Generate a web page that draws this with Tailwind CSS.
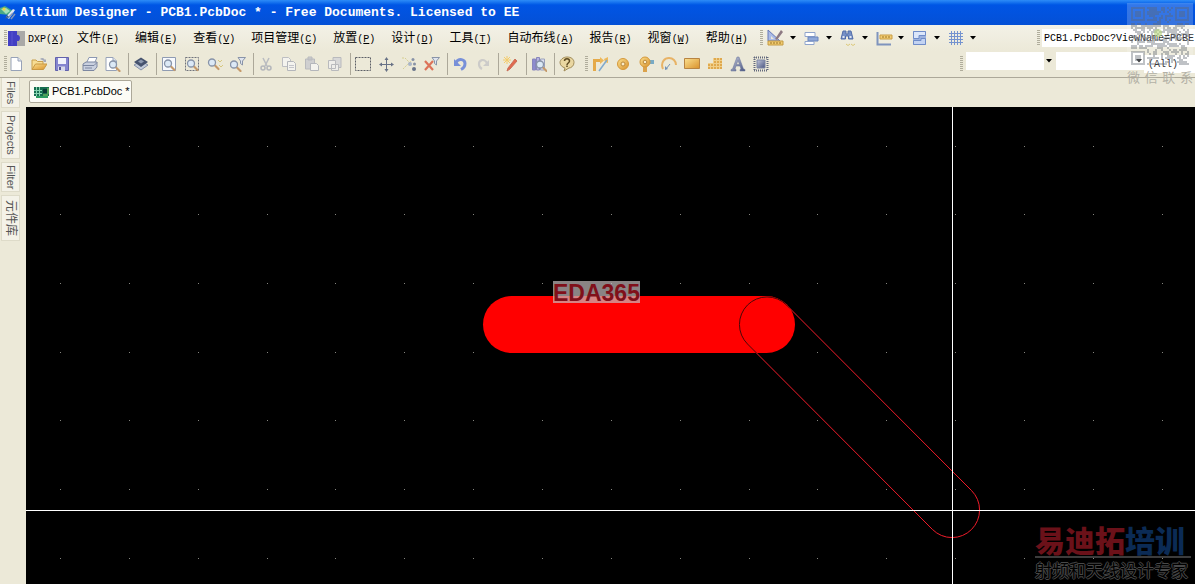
<!DOCTYPE html>
<html lang="zh-CN">
<head>
  <meta charset="UTF-8" />
  <meta name="viewport" content="width=device-width, initial-scale=1.0"/>
  <title>Altium Designer - PCB1.PcbDoc</title>
  <script src="https://cdn.jsdelivr.net/npm/@tailwindcss/browser@4"></script>
</head>
<body class="relative h-screen flex flex-col overflow-hidden bg-[#ece9d8] text-black font-['Liberation_Sans','Noto_Sans_CJK_SC',sans-serif]">

  <!-- Shared icon parts -->
  <svg class="absolute size-0" aria-hidden="true">
    <defs>
      <linearGradient id="gold" x1="0" y1="0" x2="1" y2="1"><stop offset="0" stop-color="#fbe08f"/><stop offset="1" stop-color="#d9912b"/></linearGradient>
      <linearGradient id="steel" x1="0" y1="0" x2="1" y2="1"><stop offset="0" stop-color="#c3c8dc"/><stop offset="1" stop-color="#4a5580"/></linearGradient>
      <symbol id="page" viewBox="0 0 16 16"><path d="M3 1.500h7l3.500 3.500v9.500H3z" fill="#fff" stroke="#97a2b8"/><path d="M10 1.500V5h3.500" fill="#dde3ef" stroke="#97a2b8"/></symbol>
      <symbol id="lens" viewBox="0 0 16 16"><path d="M9.500 10l4 4" stroke="#c59a6b" stroke-width="2.200" stroke-linecap="round"/><circle cx="7" cy="7.500" r="3.500" fill="#dce9f6" stroke="#8793a8" stroke-width="1.300"/></symbol>
      <symbol id="funnel" viewBox="0 0 16 16"><path d="M8 1.500h7.500L12.500 5v4l-2-1.500V5z" fill="#dfe4ee" stroke="#8994a8"/></symbol>
    </defs>
  </svg>

  <!-- Title bar -->
  <header class="h-[25px] shrink-0 flex items-center gap-1 bg-linear-to-b from-[#2d8cf7] via-[#0055e5] via-20% to-[#0450d6]">
    <svg class="size-4" viewBox="0 0 16 16"><path d="M0 3l5-2 8 5-4 4-9-1z" fill="#4aa987"/><path d="M1 4l5-1 4 3-4 3z" fill="#a5e0b8"/><circle cx="4" cy="4" r="1.500" fill="#f2d43c"/><path d="M6 12L13 4l2 1-6 9z" fill="#dfe8f5"/><path d="M8 13l5-5M11 14l4-5" stroke="#8296b8" stroke-width="1.500"/><path d="M5 14l2-4 2 2z" fill="#3e5f92"/></svg>
    <h1 class="text-[13px] leading-5 font-bold text-white whitespace-pre font-['Liberation_Mono',monospace]">Altium Designer - PCB1.PcbDoc * - Free Documents. Licensed to EE</h1>
  </header>

  <!-- Menu bar -->
  <div class="h-[26px] shrink-0 flex items-center pl-1 text-[12px] leading-4 bg-linear-to-b from-[#f3f1e7] to-[#ece9d8] font-['Liberation_Mono','Noto_Sans_CJK_SC',monospace]">
    <span class="h-4 w-[3px] bg-[repeating-linear-gradient(#b0ad9c_0_1px,transparent_1px_2px)]"></span>
    <svg class="size-[17px] ml-px mr-[3px]" viewBox="0 0 17 17"><path d="M0 1h17v15H0z" fill="#aaa9a7"/><path d="M0 1h9v4c4-1 4 7 0 6v5H0z" fill="#433fc4"/><path d="M4 2v13" stroke="#5b57d0"/></svg>
    <nav class="flex gap-4 pt-0.5 whitespace-nowrap">
      <button class="-mr-[3px]"><span class="text-[10px]">DXP(<u>X</u>)</span></button>
      <button>文件<span class="text-[10px]">(<u>F</u>)</span></button>
      <button>编辑<span class="text-[10px]">(<u>E</u>)</span></button>
      <button>查看<span class="text-[10px]">(<u>V</u>)</span></button>
      <button>项目管理<span class="text-[10px]">(<u>C</u>)</span></button>
      <button>放置<span class="text-[10px]">(<u>P</u>)</span></button>
      <button>设计<span class="text-[10px]">(<u>D</u>)</span></button>
      <button>工具<span class="text-[10px]">(<u>T</u>)</span></button>
      <button>自动布线<span class="text-[10px]">(<u>A</u>)</span></button>
      <button>报告<span class="text-[10px]">(<u>R</u>)</span></button>
      <button>视窗<span class="text-[10px]">(<u>W</u>)</span></button>
      <button>帮助<span class="text-[10px]">(<u>H</u>)</span></button>
    </nav>
    <span class="h-4 w-[3px] ml-3 mr-1 bg-[repeating-linear-gradient(#b0ad9c_0_1px,transparent_1px_2px)]"></span>
    <div class="flex gap-[7px]">
      <button aria-label="Utility tools" class="flex items-center gap-[5px]"><svg class="size-[18px]" viewBox="0 0 18 18"><path d="M1 1l12 11H1z" fill="#aabbe6" stroke="#6579b8"/><path d="M4 7l3 3H4z" fill="#ece9d8"/><path d="M8 10l6-9 2 2-6 8z" fill="#8d7a83"/><path d="M1 12h15v4H1z" fill="#f0cb70" stroke="#c49a43"/><path d="M4 13v2M7 13v2M10 13v2M13 13v2" stroke="#9b7427"/></svg><svg class="w-1.5 h-1" viewBox="0 0 6 4"><path d="M0 0h6L3 3.500z"/></svg></button>
      <button aria-label="Align" class="flex items-center gap-[5px]"><svg class="size-[18px]" viewBox="0 0 18 18"><path d="M2 3.500h10v4H2z" fill="#fff" stroke="#8fa4cc"/><path d="M5 8h10v4H5z" fill="#8fa8d8" stroke="#6a85bd"/><path d="M2 12.500h9v3H2z" fill="#fff" stroke="#8fa4cc"/></svg><svg class="w-1.5 h-1" viewBox="0 0 6 4"><path d="M0 0h6L3 3.500z"/></svg></button>
      <button aria-label="Find" class="flex items-center gap-[5px]"><svg class="size-[18px]" viewBox="0 0 18 18"><path d="M4 2h3v3h2V2h3l2 8H9.500V7h-3v3H2z" fill="#7690c6" stroke="#516ca8"/><path d="M3.500 8h2M10.500 8h2" stroke="#fff" stroke-width="1.500"/><path d="M7 15l2 1.500 2-1.500M12 15l2 1.500 2-1.500" fill="none" stroke="#dcc878"/></svg><svg class="w-1.5 h-1" viewBox="0 0 6 4"><path d="M0 0h6L3 3.500z"/></svg></button>
      <button aria-label="Dimension" class="flex items-center gap-[5px]"><svg class="size-[18px]" viewBox="0 0 18 18"><path d="M2.500 3v12.500H16" fill="none" stroke="#7f94bd" stroke-width="2"/><path d="M5 6h12v4H5z" fill="#f3cd74" stroke="#c99d45"/><path d="M8 7v2M11 7v2M14 7v2" stroke="#9b7427"/></svg><svg class="w-1.5 h-1" viewBox="0 0 6 4"><path d="M0 0h6L3 3.500z"/></svg></button>
      <button aria-label="Rooms" class="flex items-center gap-[5px]"><svg class="size-[18px]" viewBox="0 0 18 18"><path d="M2 2h13v14H2z" fill="#9db2de"/><path d="M2.500 2.500h12v4H8v3H2.500z" fill="#dbe6fa" stroke="#6f8cc8"/><path d="M2.500 11.500H10v-2h4.500v6h-12z" fill="#c3d3f2" stroke="#6f8cc8"/></svg><svg class="w-1.5 h-1" viewBox="0 0 6 4"><path d="M0 0h6L3 3.500z"/></svg></button>
      <button aria-label="Grid" class="flex items-center gap-[5px]"><svg class="size-[18px]" viewBox="0 0 18 18"><path d="M4.500 2v14M7.500 2v14M10.500 2v14M13.500 2v14M2 4.500h14M2 7.500h14M2 10.500h14M2 13.500h14" stroke="#7593cf"/></svg><svg class="w-1.5 h-1" viewBox="0 0 6 4"><path d="M0 0h6L3 3.500z"/></svg></button>
    </div>
    <div class="ml-auto w-[158px] flex items-center gap-0.5">
      <span class="h-4 w-[3px] bg-[repeating-linear-gradient(#b0ad9c_0_1px,transparent_1px_2px)]"></span>
      <input aria-label="Document address" value="PCB1.PcbDoc?ViewName=PCBE" class="min-w-0 flex-1 h-[18px] pl-0.5 bg-white text-[10px] outline-none" />
    </div>
  </div>

  <!-- Toolbar -->
  <div class="h-[27px] shrink-0 flex items-center pl-1 border-b border-[#aca899]">
    <span class="h-4 w-[3px] mr-px bg-[repeating-linear-gradient(#b0ad9c_0_1px,transparent_1px_2px)]"></span>
    <div class="h-[22px] flex items-center gap-[7px] pr-[7px] border-r border-[#aca899]">
      <button aria-label="New"><svg class="size-4" viewBox="0 0 16 16"><use href="#page"/></svg></button>
      <button aria-label="Open"><svg class="size-4" viewBox="0 0 16 16"><path d="M1 13.500V4h4l1.500 1.500H12V8" fill="#f7dd94" stroke="#c99f4d"/><path d="M1 13.500L4.500 8H16l-3.500 5.500z" fill="url(#gold)" stroke="#c99843"/><path d="M9 3c2-2 4-1 5 1l1-1v3h-3l1-1" fill="#a4a9b8"/></svg></button>
      <button aria-label="Save"><svg class="size-4" viewBox="0 0 16 16"><path d="M1.500 1.500h13v13h-13z" fill="#8585cf" stroke="#6262ac"/><path d="M4 2h8v6H4z" fill="#f2f3fb"/><path d="M4 10.500h7V15H4z" fill="#d9dae9"/><path d="M5 11h2v3H5z" fill="#54549b"/></svg></button>
    </div>
    <div class="h-[22px] flex items-center gap-[7px] pl-1 pr-[7px] border-r border-[#aca899]">
      <button aria-label="Print"><svg class="size-4" viewBox="0 0 16 16"><path d="M4.500 7L7 1.500h8L12.500 7z" fill="#fff" stroke="#8b97b2"/><path d="M1 8l3-2h11v5l-3 3.500H1z" fill="#c9d0df" stroke="#7c87a1"/><path d="M1 9.500h11l3-3M3 12h7" fill="none" stroke="#7c87a1"/></svg></button>
      <button aria-label="Preview"><svg class="size-4" viewBox="0 0 16 16"><use href="#page" x="-2"/><use href="#lens" x="1" y="1"/></svg></button>
    </div>
    <div class="h-[22px] flex items-center pl-1 pr-[7px] border-r border-[#aca899]">
      <button aria-label="Layers"><svg class="size-4" viewBox="0 0 16 16"><path d="M1 9l7 5 7-5-7-4z" fill="#c3cbd9" stroke="#8591a8"/><path d="M1 6l7-4.500L15 6l-7 5z" fill="#46536e"/><path d="M5 5.500l3-2 3 2-3 2z" fill="#8d99af"/></svg></button>
    </div>
    <div class="h-[22px] flex items-center gap-[7px] pl-1 pr-[7px] border-r border-[#aca899]">
      <button aria-label="Fit document"><svg class="size-4" viewBox="0 0 16 16"><path d="M1.500 1.500h13v13h-13z" fill="#f7f9fd" stroke="#8f9bb2"/><use href="#lens"/></svg></button>
      <button aria-label="Zoom area"><svg class="size-4" viewBox="0 0 16 16"><path d="M1.500 1.500h13v13h-13z" fill="none" stroke="#70737c" stroke-dasharray="2 1"/><use href="#lens"/></svg></button>
      <button aria-label="Zoom selected"><svg class="size-4" viewBox="0 0 16 16"><use href="#lens" x="-2" y="-1"/><path d="M11 4l2 2 2-2M12 9l2 2 2-2" stroke="#d6c77f" fill="none"/></svg></button>
      <button aria-label="Zoom filtered"><svg class="size-4" viewBox="0 0 16 16"><use href="#funnel"/><use href="#lens" x="-3" y="1"/></svg></button>
    </div>
    <div class="h-[22px] flex items-center gap-[7px] pl-1 pr-[7px] border-r border-[#aca899]">
      <button aria-label="Cut"><svg class="size-4" viewBox="0 0 16 16"><path d="M5 2l4 8M11 2l-4 8" stroke="#b9bbc0" stroke-width="1.500"/><circle cx="5" cy="12" r="2" fill="none" stroke="#b4b6bb" stroke-width="1.500"/><circle cx="11" cy="12" r="2" fill="none" stroke="#b4b6bb" stroke-width="1.500"/></svg></button>
      <button aria-label="Copy"><svg class="size-4" viewBox="0 0 16 16"><path d="M1.500 1.500h6l2 2v7h-8z" fill="#f4f3ee" stroke="#bdbec2"/><path d="M6.500 5.500h6l2 2v7h-8z" fill="#f4f3ee" stroke="#b4b6bb"/><path d="M8 9.500h5M8 11.500h5" stroke="#c4c5ca"/></svg></button>
      <button aria-label="Paste"><svg class="size-4" viewBox="0 0 16 16"><path d="M1.500 3h9v10h-9zM4 1h4v3H4z" fill="#cfcfd0" stroke="#b9babd"/><path d="M6.500 7.500h6l2 2v5h-8z" fill="#f4f3ee" stroke="#b4b6bb"/></svg></button>
      <button aria-label="Rubber stamp"><svg class="size-4" viewBox="0 0 16 16"><path d="M6 1.500h8v10H6z" fill="#d8d8d8" stroke="#b9babd"/><path d="M1.500 4.500h7v8h-7zM4.500 8.500h7v6h-7z" fill="#efeeea" stroke="#b9babd"/></svg></button>
    </div>
    <div class="h-[22px] flex items-center gap-[7px] pl-1 pr-[7px] border-r border-[#aca899]">
      <button aria-label="Select area"><svg class="size-4" viewBox="0 0 16 16"><path d="M.5 1.500h15v13H.5z" fill="none" stroke="#5c5f66" stroke-dasharray="2 1"/></svg></button>
      <button aria-label="Move"><svg class="size-4" viewBox="0 0 16 16"><path d="M8.500 3v11M3 8.500h11" stroke="#687286"/><path d="M8.500 1l2 3h-4zM8.500 16l2-3h-4zM1 8.500l3-2v4zM16 8.500l-3-2v4z" fill="#687286"/></svg></button>
      <button aria-label="Deselect"><svg class="size-4" viewBox="0 0 16 16"><path d="M1 2h3l7 7M2 13l8-8" stroke="#d6cf91" fill="none" stroke-dasharray="2 1"/><circle cx="12" cy="3.500" r="1.500" fill="#8792a6"/><circle cx="9" cy="8" r="2" fill="#a9b5c8"/><circle cx="13.500" cy="8" r="1.500" fill="#8792a6"/><circle cx="13" cy="13" r="2" fill="#68738a"/></svg></button>
      <button aria-label="Clear filter"><svg class="size-4" viewBox="0 0 16 16"><use href="#funnel"/><path d="M1 5l8 9M9 5l-8 9" stroke="#dc7359" stroke-width="2.200"/></svg></button>
    </div>
    <div class="h-[22px] flex items-center gap-[7px] pl-1 pr-[7px] border-r border-[#aca899]">
      <button aria-label="Undo"><svg class="size-4" viewBox="0 0 16 16"><path d="M4 6.500c3-5 9-3 9 1 0 3-2 5-4 6" fill="none" stroke="#7890d8" stroke-width="3"/><path d="M2 3v7h7z" fill="#7890d8"/></svg></button>
      <button aria-label="Redo"><svg class="size-4" viewBox="0 0 16 16"><path d="M12 7C9 2 4 4 4 8c0 2 1 4 3 5" fill="none" stroke="#cccbc9" stroke-width="2.200"/><path d="M14 4v6H8z" fill="#cccbc9"/></svg></button>
    </div>
    <div class="h-[22px] flex items-center pl-1 pr-[7px] border-r border-[#aca899]">
      <button aria-label="Cross probe"><svg class="size-4" viewBox="0 0 16 16"><path d="M4 0v8M0 4h8M1 1l6 6M7 1L1 7" stroke="#f4cc6a"/><path d="M5 12l7-9 2 2-7 8-3 2z" fill="#e2694e" stroke="#c9705a"/></svg></button>
    </div>
    <div class="h-[22px] flex items-center pl-1 pr-[7px] border-r border-[#aca899]">
      <button aria-label="Browse library"><svg class="size-4" viewBox="0 0 16 16"><path d="M1.500 3h3v11h-3z" fill="#8d8bcf" stroke="#8886bb"/><path d="M5.500 1.500h3V14h-3z" fill="#b5b3e0" stroke="#8886bb"/><path d="M9.500 3h4v11h-4z" fill="#dddff0" stroke="#9aa1bb"/><use href="#lens" x="2" y="1"/></svg></button>
    </div>
    <button aria-label="Help" class="ml-1"><svg class="size-4" viewBox="0 0 16 16"><path d="M8 1c4 0 7 2 7 5.500S12 12 10 12l-5 3 1-3C3 11 1 9 1 6.500S4 1 8 1z" fill="#ead7a1" stroke="#a18c59"/><path d="M5.500 5c0-3 5-3 5 0 0 2-2.500 2-2.500 4M8 9.500v1.500" fill="none" stroke="#5f4c22" stroke-width="1.500"/></svg></button>
    <span class="h-4 w-[3px] ml-2.5 mr-1 bg-[repeating-linear-gradient(#b0ad9c_0_1px,transparent_1px_2px)]"></span>
    <div class="flex items-center gap-[7px]">
      <button aria-label="Route"><svg class="size-4" viewBox="0 0 16 16"><path d="M2.500 15V4.500H9" fill="none" stroke="#e5aa49" stroke-width="3"/><path d="M8 1l4 3.500L8 8zM12 3l4-2v6l-3-1z" fill="#efb959"/><path d="M15 4l-8 11" stroke="#80a9cc" stroke-width="1.500"/></svg></button>
      <button aria-label="Place pad"><svg class="size-4" viewBox="0 0 16 16"><circle cx="8" cy="8" r="5.500" fill="url(#gold)" stroke="#d5993b"/><circle cx="8" cy="8" r="2" fill="#f9ecc9" stroke="#bb893b"/></svg></button>
      <button aria-label="Place via"><svg class="size-4" viewBox="0 0 16 16"><path d="M5 9h4v7H5z" fill="#dba24b"/><path d="M9 4h7v4H9z" fill="#79abc5"/><circle cx="7" cy="6" r="5" fill="url(#gold)" stroke="#d5993b"/><circle cx="7" cy="6" r="1.800" fill="#f9ecc9" stroke="#bb893b"/></svg></button>
      <button aria-label="Place arc"><svg class="size-4" viewBox="0 0 16 16"><path d="M2 13C-1 6 4 2 8 2s7 3 7 7" fill="none" stroke="#e8b366" stroke-width="2"/><path d="M9 8l-4 5" stroke="#7391b5"/><path d="M4 14v-4l3 3z" fill="#7391b5"/></svg></button>
      <button aria-label="Place fill"><svg class="size-4" viewBox="0 0 16 16"><path d="M.5 2.500h15v10H.5z" fill="url(#gold)" stroke="#b88442"/></svg></button>
      <button aria-label="Place polygon"><svg class="size-4" viewBox="0 0 16 16"><path d="M6 2h9v11H1V7h5z" fill="#dfa94e"/><path d="M3.500 7v6M6.500 2v11M9.500 2v11M12.500 2v11M6 4.500h9M1 7.500h14M1 10.500h14" stroke="#f0cf8a"/></svg></button>
      <button aria-label="Place string"><svg class="size-4" viewBox="0 0 16 16"><path d="M1 15v-1.500l1.500-.5L7 1h2l4.500 12 1.500.5V15h-5v-1.500l1-.5-1-3H6l-1 3 1 .5V15zM6.500 8.500h3L8 4.500z" fill="url(#steel)" fill-rule="evenodd" stroke="#69749a" stroke-width=".5"/></svg></button>
      <button aria-label="Place component"><svg class="size-4" viewBox="0 0 16 16"><path d="M1 1.500h14M1 14.500h14M1.500 1v14M14.500 1v14" stroke="#62697c" stroke-width="2" stroke-dasharray="1 1"/><path d="M4 4h8v8H4z" fill="url(#steel)" stroke="#7b84a3"/></svg></button>
    </div>
    <div class="ml-auto w-[235px] flex items-center">
      <span class="h-4 w-[3px] mr-[3px] bg-[repeating-linear-gradient(#b0ad9c_0_1px,transparent_1px_2px)]"></span>
      <div class="relative w-[88px]">
        <select aria-label="Filter net" class="w-full h-[18px] appearance-none bg-white"><option></option></select>
        <span class="absolute right-0 top-0 w-2.5 h-[18px] flex items-center justify-center bg-[#ece9d8] pointer-events-none"><svg class="w-1.5 h-1" viewBox="0 0 6 4"><path d="M0 0h6L3 3.500z"/></svg></span>
      </div>
      <div class="relative ml-0.5 w-[88px]">
        <select aria-label="Filter component" class="w-full h-[18px] appearance-none bg-white"><option></option></select>
        <svg class="absolute right-0.5 top-[7px] w-1.5 h-1 pointer-events-none" viewBox="0 0 6 4"><path d="M0 0h6L3 3.500z"/></svg>
      </div>
      <select aria-label="Filter scope" class="flex-1 h-[18px] pl-1 appearance-none bg-white text-[10px] font-['Liberation_Mono',monospace]"><option>(All)</option></select>
    </div>
  </div>

  <div class="flex-1 min-h-0 flex">
    <!-- Panel tabs -->
    <aside class="w-[26px] shrink-0 flex flex-col items-start gap-[3px] pl-px text-[11px] leading-4 text-[#555]">
      <button class="w-[19px] h-[30px] flex items-center justify-center border border-t-0 border-[#dedbc9] bg-[#f4f2e8]"><span class="[writing-mode:vertical-rl]">Files</span></button>
      <button class="w-[19px] h-12 flex items-center justify-center border border-[#dedbc9] bg-[#f4f2e8]"><span class="[writing-mode:vertical-rl]">Projects</span></button>
      <button class="w-[19px] h-[30px] flex items-center justify-center border border-[#dedbc9] bg-[#f4f2e8]"><span class="[writing-mode:vertical-rl]">Filter</span></button>
      <button class="w-[19px] h-[46px] flex items-center justify-center border border-[#dedbc9] bg-[#f4f2e8]"><span class="text-[12px] [writing-mode:vertical-rl] [text-orientation:sideways]">元件库</span></button>
    </aside>

    <main class="flex-1 min-w-0 flex flex-col">
      <!-- Document tabs -->
      <div class="h-[29px] shrink-0 pl-[3px] pt-0.5">
        <button class="h-[23px] flex items-center gap-0.5 pl-1 pr-px rounded-xs border border-[#aca899] bg-[#fcfcf6] text-[11px] whitespace-nowrap">
          <svg class="w-4 h-3" viewBox="0 0 16 12"><path d="M0 1h15v9H0z" fill="#176d50"/><path d="M2 10h12v2H2z" fill="#2c9c61"/><path d="M2.500 1v9M5.500 1v9M0 4.500h8M0 7.500h8" stroke="#86d5b0"/><path d="M9 3h4v4H9z" fill="#0a3b37"/><path d="M9 9h5M14 2v6" stroke="#8bd461"/></svg>
          PCB1.PcbDoc *
        </button>
      </div>

      <!-- PCB canvas -->
      <div class="relative flex-1 min-h-0 bg-black overflow-hidden">
        <svg class="absolute inset-0 size-full" aria-label="PCB layout">
          <g id="grid" fill="#85857f"></g>
          <path d="M760.500 198L945.500 383.500A27.500 27.500 0 0 1 906.500 422.500L721.500 237" fill="none" stroke="#f01c2a"/>
          <path d="M485.500 217.500H740.500" stroke="#f00" stroke-width="57" stroke-linecap="round"/>
          <path d="M764 201.500L760.500 198A27.500 27.500 0 0 0 721.500 237L730.500 246" fill="none" stroke="#4a0808"/>
          <rect x="926" y="0" width="1" height="100%" fill="#fff"/>
          <rect x="0" y="403" width="100%" height="1" fill="#fff"/>
        </svg>
        <span class="absolute left-[527px] top-[174px] h-[22px] bg-[#c4bcbc]/70 text-[23px] leading-[24px] font-bold text-[#80101a]">EDA365</span>

        <!-- Training logo -->
        <div class="absolute right-1 bottom-0.5 w-[156px] whitespace-nowrap">
          <p class="border-b-2 border-[#3c3c3c] text-[30px] leading-[34px] font-black text-[#0b2b55] font-['Noto_Sans_CJK_SC',sans-serif]"><span class="text-[#6b1119]">易迪拓</span>培训</p>
          <p class="text-[17px] leading-6 text-black [text-shadow:1px_0_#484848,-1px_0_#484848,0_1px_#484848,0_-1px_#484848] font-['Noto_Sans_CJK_SC',sans-serif]">射频和天线设计专家</p>
        </div>
      </div>
    </main>
  </div>

  <!-- QR watermark -->
  <div class="absolute right-0.5 top-[3px] w-[66px] flex flex-col items-center pointer-events-none">
    <svg class="size-[66px]" viewBox="0 0 66 66"><rect width="66" height="66" fill="#fff" fill-opacity=".2"/><g id="qr" fill="#5f6670" fill-opacity=".4"></g><circle cx="31" cy="30" r="4" fill="#b5d67a" fill-opacity=".6"/></svg>
    <div class="w-full flex justify-between text-[13px] leading-4 text-[#b3b1a6] font-['Noto_Sans_CJK_SC',sans-serif]"><span>微</span><span>信</span><span>联</span><span>系</span></div>
  </div>

  <script>
    const ns = 'http://www.w3.org/2000/svg';

    function addRect(parent, x, y, w, h) {
      const rect = document.createElementNS(ns, 'rect');
      rect.setAttribute('x', x);
      rect.setAttribute('y', y);
      rect.setAttribute('width', w);
      rect.setAttribute('height', h);
      parent.appendChild(rect);
    }

    // Snap grid dots
    const grid = document.getElementById('grid');
    for (let row = 0; row < 30; row++) {
      for (let col = 0; col < 40; col++) {
        addRect(grid, Math.round(34 + col * 68.85), Math.round(38.6 + row * 68.7), 1, 1);
      }
    }

    // QR modules, with the three finder squares kept clear
    const qr = document.getElementById('qr');
    const size = 29;
    let seed = 7;
    for (let r = 0; r < size; r++) {
      for (let c = 0; c < size; c++) {
        seed = (seed * 16807) % 2147483647;
        const finder = (r < 8 && c < 8) || (r < 8 && c > 20) || (r > 20 && c < 8);
        if (!finder && seed / 2147483647 > 0.48) addRect(qr, 4 + c * 2, 4 + r * 2, 2, 2);
      }
    }
    [[4, 4], [48, 4], [4, 48]].forEach(([x, y]) => {
      addRect(qr, x, y, 14, 2);
      addRect(qr, x, y + 12, 14, 2);
      addRect(qr, x, y + 2, 2, 10);
      addRect(qr, x + 12, y + 2, 2, 10);
      addRect(qr, x + 4, y + 4, 6, 6);
    });
  </script>
</body>
</html>
